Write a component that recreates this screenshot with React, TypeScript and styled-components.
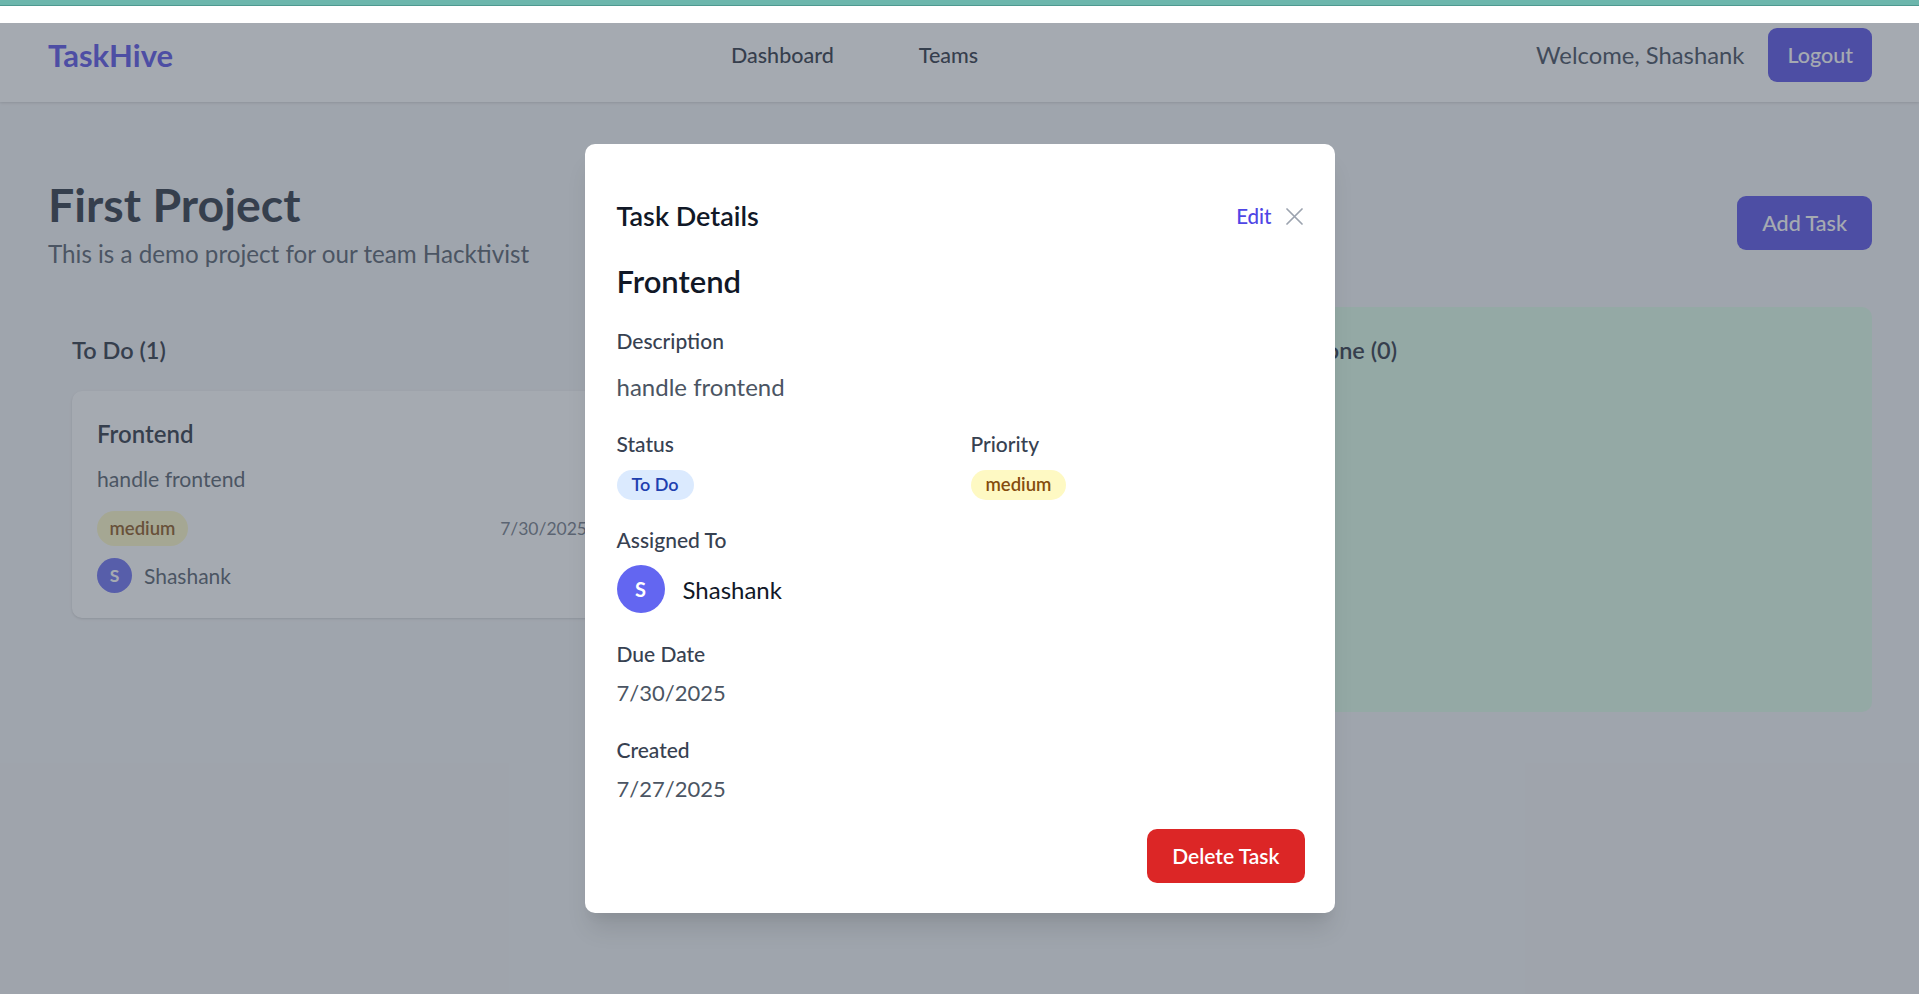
import React from "react";
import styled, { createGlobalStyle } from "styled-components";

const GlobalStyle = createGlobalStyle`
  html, body { margin: 0; padding: 0; }
  body {
    font-family: Lato, "Open Sans", sans-serif;
    background: #f3f4f6;
    overflow: hidden;
    -webkit-font-smoothing: antialiased;
  }
  * { box-sizing: border-box; }
`;

const TopStrip = styled.div`
  height: 23px;
  background: linear-gradient(#6cb6ac 0 5px, #4e9990 5px 6px, #ffffff 6px);
`;

const Shell = styled.div`
  position: relative;
  height: 971px;
  overflow: hidden;
`;

const NavBar = styled.header`
  height: 79px;
  background: #ffffff;
  display: flex;
  align-items: center;
  justify-content: space-between;
  padding: 0 47px 16px 48px;
  box-shadow: 0 1px 3px rgba(0, 0, 0, 0.1), 0 1px 2px rgba(0, 0, 0, 0.06);
  position: relative;
`;

const Logo = styled.div`
  font-size: 31px;
  font-weight: 700;
  color: #4f46e5;
`;

const NavLinks = styled.nav`
  display: flex;
  gap: 85px;
`;

const NavLink = styled.a`
  font-size: 21.5px;
  font-weight: 500;
  color: #1f2937;
  text-decoration: none;
`;

const UserArea = styled.div`
  display: flex;
  align-items: center;
  gap: 24px;
`;

const Welcome = styled.span`
  font-size: 23.8px;
  color: #374151;
`;

const PrimaryButton = styled.button<{ $px: number }>`
  background: #4f46e5;
  color: #ffffff;
  border: none;
  border-radius: 9px;
  font-family: inherit;
  font-size: 21.5px;
  font-weight: 500;
  line-height: 34px;
  padding: 10px ${(p) => p.$px}px;
  cursor: pointer;
`;

const Main = styled.main`
  padding: 0 47px 0 48px;
`;

const PageHeader = styled.div`
  margin-top: 77px;
  display: flex;
  align-items: center;
  justify-content: space-between;
`;

const TitleBlock = styled.div`
  display: flex;
  flex-direction: column;
`;

const PageTitle = styled.h1`
  margin: 0;
  font-size: 46.5px;
  line-height: 50px;
  font-weight: 700;
  color: #1f2937;
`;

const PageSubtitle = styled.p`
  margin: 7px 0 0;
  font-size: 24.2px;
  line-height: 35px;
  color: #4b5563;
`;

const AddButtonWrap = styled.div`
  margin-bottom: 4px;
`;

const Board = styled.div`
  margin-top: 36px;
  display: grid;
  grid-template-columns: repeat(3, 1fr);
  gap: 30px;
`;

const Column = styled.section<{ $bg: string }>`
  background: ${(p) => p.$bg};
  border-radius: 10px;
  padding: 26px 24px 24px;
  min-height: 405px;
`;

const ColumnTitle = styled.h2`
  margin: 0 0 23px;
  font-size: 23.5px;
  line-height: 35px;
  font-weight: 600;
  color: #1f2937;
`;

const Card = styled.div`
  background: #ffffff;
  border-radius: 10px;
  padding: 25px;
  box-shadow: 0 1px 3px rgba(0, 0, 0, 0.1), 0 1px 2px rgba(0, 0, 0, 0.06);
`;

const CardTitle = styled.h3`
  margin: 0;
  font-size: 24px;
  line-height: 35px;
  font-weight: 600;
  color: #1f2937;
`;

const CardDesc = styled.p`
  margin: 13px 0 0;
  font-size: 21.2px;
  line-height: 30px;
  color: #4b5563;
`;

const CardMeta = styled.div`
  margin-top: 17px;
  display: flex;
  align-items: center;
  justify-content: space-between;
`;

const Pill = styled.span<{ $bg: string; $fg: string; $py: number; $px: number; $fs: number }>`
  display: inline-block;
  background: ${(p) => p.$bg};
  color: ${(p) => p.$fg};
  border-radius: 999px;
  font-size: ${(p) => p.$fs}px;
  font-weight: 600;
  line-height: 25px;
  padding: ${(p) => p.$py}px ${(p) => p.$px}px;
`;

const SmallDate = styled.span`
  font-size: 17.5px;
  color: #6b7280;
`;

const Assignee = styled.div<{ $gap: number; $mt: number }>`
  margin-top: ${(p) => p.$mt}px;
  display: flex;
  align-items: center;
  gap: ${(p) => p.$gap}px;
`;

const Avatar = styled.div<{ $size: number; $fs: number }>`
  width: ${(p) => p.$size}px;
  height: ${(p) => p.$size}px;
  border-radius: 50%;
  background: #6366f1;
  color: #ffffff;
  display: flex;
  align-items: center;
  justify-content: center;
  font-size: ${(p) => p.$fs}px;
  font-weight: 700;
  flex-shrink: 0;
`;

const AssigneeName = styled.span<{ $fs: number; $color: string }>`
  font-size: ${(p) => p.$fs}px;
  line-height: 35px;
  color: ${(p) => p.$color};
`;

/* ---------- Modal ---------- */

const Overlay = styled.div`
  position: absolute;
  inset: 0;
  background: rgba(75, 85, 99, 0.5);
  display: flex;
  justify-content: center;
  align-items: flex-start;
  padding-top: 121px;
`;

const Modal = styled.div`
  width: 750px;
  background: #ffffff;
  border-radius: 10px;
  padding: 30px 30px 30px 32px;
  box-shadow: 0 20px 25px -5px rgba(0, 0, 0, 0.1), 0 10px 10px -5px rgba(0, 0, 0, 0.04);
`;

const ModalHeader = styled.div`
  margin-top: 24px;
  height: 36px;
  display: flex;
  align-items: center;
  justify-content: space-between;
`;

const ModalTitle = styled.h2`
  margin: 0;
  font-size: 27px;
  line-height: 36px;
  font-weight: 600;
  color: #111827;
`;

const HeaderActions = styled.div`
  display: flex;
  align-items: center;
  gap: 14px;
  margin-right: 2px;
`;

const EditLink = styled.button`
  background: none;
  border: none;
  padding: 0;
  font-family: inherit;
  font-size: 20.5px;
  line-height: 30px;
  font-weight: 500;
  color: #4f46e5;
  cursor: pointer;
`;

const CloseButton = styled.button`
  background: none;
  border: none;
  padding: 0;
  width: 17px;
  height: 17px;
  display: flex;
  cursor: pointer;
`;

const TaskTitle = styled.h3`
  margin: 28px 0 0;
  font-size: 31px;
  line-height: 38px;
  font-weight: 600;
  color: #111827;
`;

const Section = styled.div<{ $mt: number }>`
  margin-top: ${(p) => p.$mt}px;
`;

const Label = styled.div`
  font-size: 21px;
  line-height: 30px;
  font-weight: 500;
  color: #374151;
`;

const Value = styled.div<{ $mt: number; $fs: number }>`
  margin-top: ${(p) => p.$mt}px;
  font-size: ${(p) => p.$fs}px;
  line-height: 35px;
  color: #4b5563;
`;

const TwoCol = styled.div`
  margin-top: 25px;
  display: grid;
  grid-template-columns: 1fr 1fr;
  gap: 20px;
`;

const BadgeSlot = styled.div`
  margin-top: 11px;
  display: flex;
`;

const ModalFooter = styled.div`
  margin-top: 23px;
  display: flex;
  justify-content: flex-end;
`;

const DangerButton = styled.button`
  background: #dc2626;
  color: #ffffff;
  border: none;
  border-radius: 10px;
  font-family: inherit;
  font-size: 21px;
  font-weight: 600;
  line-height: 34px;
  padding: 10px 25px;
  cursor: pointer;
`;

const CloseIcon = () => (
  <svg width="17" height="17" viewBox="0 0 17 17" fill="none">
    <path d="M1 1L16 16M16 1L1 16" stroke="#9ca3af" strokeWidth="1.7" strokeLinecap="round" />
  </svg>
);

const columns = [
  { title: "To Do (1)", bg: "#f3f4f6", hasCard: true },
  { title: "In Progress (0)", bg: "#dbeafe", hasCard: false },
  { title: "Done (0)", bg: "#dcfce7", hasCard: false },
];

export default function App() {
  return (
    <>
      <GlobalStyle />
      <TopStrip />
      <Shell>
        <NavBar>
          <Logo>TaskHive</Logo>
          <NavLinks>
            <NavLink>Dashboard</NavLink>
            <NavLink>Teams</NavLink>
          </NavLinks>
          <UserArea>
            <Welcome>Welcome, Shashank</Welcome>
            <PrimaryButton $px={19}>Logout</PrimaryButton>
          </UserArea>
        </NavBar>

        <Main>
          <PageHeader>
            <TitleBlock>
              <PageTitle>First Project</PageTitle>
              <PageSubtitle>This is a demo project for our team Hacktivist</PageSubtitle>
            </TitleBlock>
            <AddButtonWrap>
              <PrimaryButton $px={25}>Add Task</PrimaryButton>
            </AddButtonWrap>
          </PageHeader>

          <Board>
            {columns.map((c) => (
              <Column key={c.title} $bg={c.bg}>
                <ColumnTitle>{c.title}</ColumnTitle>
                {c.hasCard && (
                  <Card>
                    <CardTitle>Frontend</CardTitle>
                    <CardDesc>handle frontend</CardDesc>
                    <CardMeta>
                      <Pill $bg="#fef9c3" $fg="#854d0e" $py={5} $px={12.5} $fs={18.5}>
                        medium
                      </Pill>
                      <SmallDate>7/30/2025</SmallDate>
                    </CardMeta>
                    <Assignee $gap={12} $mt={12}>
                      <Avatar $size={35} $fs={17.5}>S</Avatar>
                      <AssigneeName $fs={21} $color="#4b5563">Shashank</AssigneeName>
                    </Assignee>
                  </Card>
                )}
              </Column>
            ))}
          </Board>
        </Main>

        <Overlay>
          <Modal>
            <ModalHeader>
              <ModalTitle>Task Details</ModalTitle>
              <HeaderActions>
                <EditLink>Edit</EditLink>
                <CloseButton aria-label="Close">
                  <CloseIcon />
                </CloseButton>
              </HeaderActions>
            </ModalHeader>

            <TaskTitle>Frontend</TaskTitle>

            <Section $mt={26}>
              <Label>Description</Label>
              <Value $mt={12.5} $fs={24}>handle frontend</Value>
            </Section>

            <TwoCol>
              <div>
                <Label>Status</Label>
                <BadgeSlot>
                  <Pill $bg="#dbeafe" $fg="#1e40af" $py={2.5} $px={15} $fs={18}>
                    To Do
                  </Pill>
                </BadgeSlot>
              </div>
              <div>
                <Label>Priority</Label>
                <BadgeSlot>
                  <Pill $bg="#fef9c3" $fg="#854d0e" $py={2.5} $px={15} $fs={18.5}>
                    medium
                  </Pill>
                </BadgeSlot>
              </div>
            </TwoCol>

            <Section $mt={25}>
              <Label>Assigned To</Label>
              <Assignee $gap={18} $mt={10.5}>
                <Avatar $size={48} $fs={20}>S</Avatar>
                <AssigneeName $fs={24} $color="#111827">Shashank</AssigneeName>
              </Assignee>
            </Section>

            <Section $mt={26}>
              <Label>Due Date</Label>
              <Value $mt={6} $fs={22}>7/30/2025</Value>
            </Section>

            <Section $mt={25}>
              <Label>Created</Label>
              <Value $mt={6} $fs={22}>7/27/2025</Value>
            </Section>

            <ModalFooter>
              <DangerButton>Delete Task</DangerButton>
            </ModalFooter>
          </Modal>
        </Overlay>
      </Shell>
    </>
  );
}
